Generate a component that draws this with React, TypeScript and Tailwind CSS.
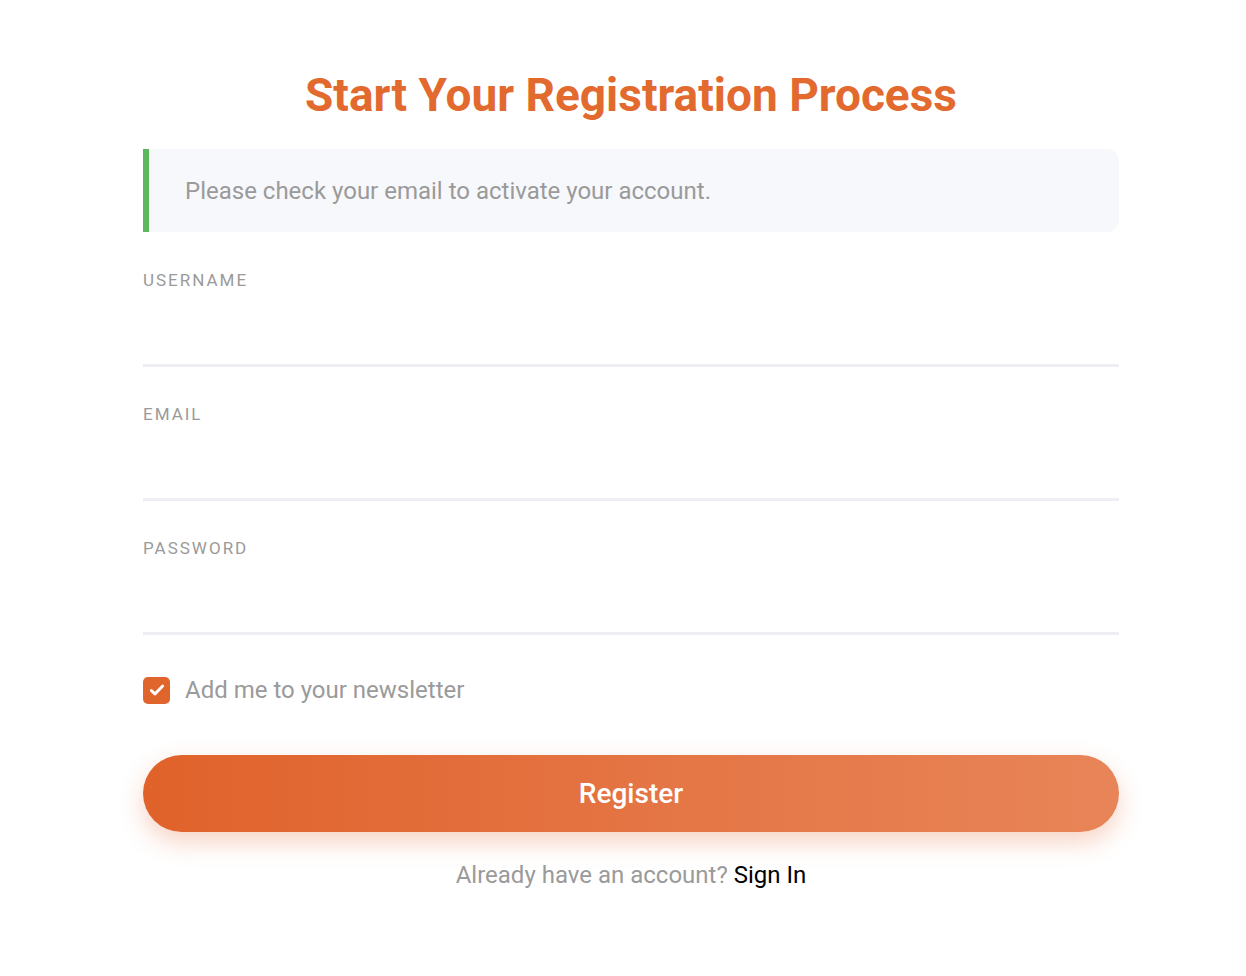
import { useState } from 'react';

const fields = ['Username', 'Email', 'Password'];

export default function App() {
    const [subscribed, setSubscribed] = useState(true);

    return (
        <div className="min-h-screen bg-white font-['Roboto',sans-serif]">
            <div className="mx-auto w-[992px] pl-4 pt-[64px]">
                {/* Title */}
                <h1 className="text-center text-[46px] leading-[62px] font-bold text-[#e36a2e]">
                    Start Your Registration Process
                </h1>

                {/* Notice */}
                <div className="mt-[23px] h-[83px] flex items-center border-l-[6px] border-[#5cb85c] bg-[#f7f8fc] rounded-r-xl pl-[36px]">
                    <p className="text-[24px] text-[#9a9a9a]">Please check your email to activate your account.</p>
                </div>

                {/* Fields */}
                <form className="mt-[38px] flex flex-col gap-[37px]" onSubmit={e => e.preventDefault()}>
                    {fields.map(name => (
                        <div key={name}>
                            <label className="block text-[17px] leading-[20px] tracking-[2px] uppercase text-[#9a9a9a]">
                                {name}
                            </label>
                            <input
                                type={name === 'Password' ? 'password' : name === 'Email' ? 'email' : 'text'}
                                className="block w-full h-[77px] border-b-[3px] border-[#eeeff3] outline-none text-[20px] text-gray-700 bg-transparent"
                            />
                        </div>
                    ))}

                    {/* Newsletter */}
                    <label className="flex items-center gap-[15px] cursor-pointer">
                        <span
                            onClick={() => setSubscribed(!subscribed)}
                            className={`w-[27px] h-[27px] rounded-[5px] flex items-center justify-center ${subscribed ? 'bg-[#e0652c]' : 'border-2 border-gray-300'}`}
                        >
                            {subscribed && (
                                <svg width="18" height="18" viewBox="0 0 16 16" fill="none">
                                    <path d="M3 8.5l3.2 3L13 4.5" stroke="white" strokeWidth="2.6" strokeLinecap="round" strokeLinejoin="round" />
                                </svg>
                            )}
                        </span>
                        <span className="text-[24px] text-[#9a9a9a]">Add me to your newsletter</span>
                    </label>

                    {/* Submit */}
                    <button
                        type="submit"
                        className="mt-[10px] w-full h-[77px] rounded-full bg-gradient-to-r from-[#e0622a] to-[#e88558] text-white text-[28px] font-medium shadow-[0_10px_25px_rgba(230,110,60,0.3)]"
                    >
                        Register
                    </button>
                </form>

                <p className="mt-[25px] text-center text-[24px] text-[#9a9a9a]">
                    Already have an account? <a href="#" className="text-black">Sign In</a>
                </p>
            </div>
        </div>
    );
}
